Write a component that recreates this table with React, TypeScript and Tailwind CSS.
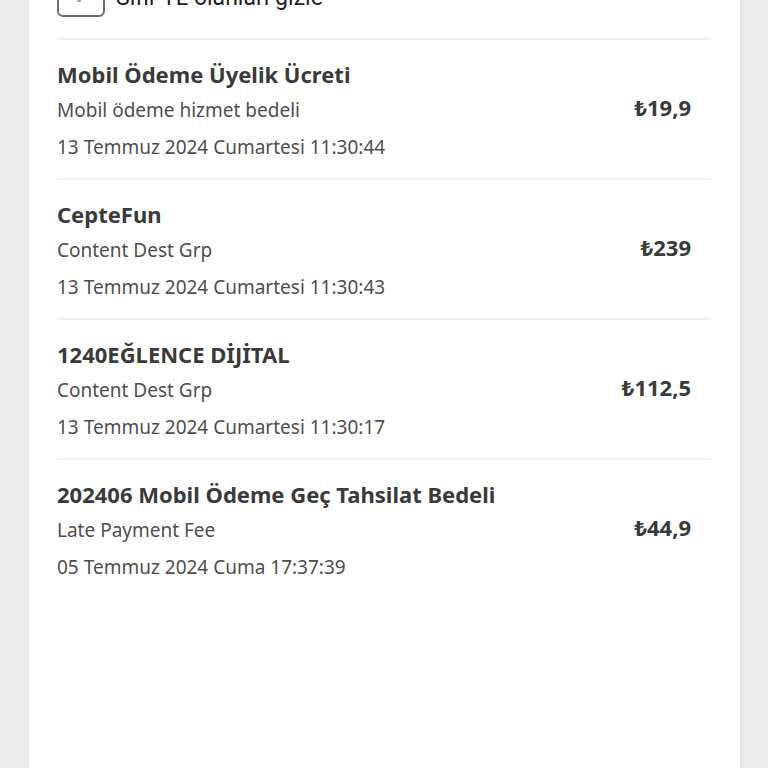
import React from "react";

type Item = {
  title: string;
  detail: string;
  date: string;
  amount: string;
};

const items: Item[] = [
  {
    title: "Mobil Ödeme Üyelik Ücreti",
    detail: "Mobil ödeme hizmet bedeli",
    date: "13 Temmuz 2024 Cumartesi 11:30:44",
    amount: "₺19,9",
  },
  {
    title: "CepteFun",
    detail: "Content Dest Grp",
    date: "13 Temmuz 2024 Cumartesi 11:30:43",
    amount: "₺239",
  },
  {
    title: "1240EĞLENCE DİJİTAL",
    detail: "Content Dest Grp",
    date: "13 Temmuz 2024 Cumartesi 11:30:17",
    amount: "₺112,5",
  },
  {
    title: "202406 Mobil Ödeme Geç Tahsilat Bedeli",
    detail: "Late Payment Fee",
    date: "05 Temmuz 2024 Cuma 17:37:39",
    amount: "₺44,9",
  },
];

function Row({ item }: { item: Item }) {
  return (
    <div className="flex items-center border-t-2 border-[#eeeeee] pt-[16px] pb-[13px]">
      <div className="flex-1 min-w-0">
        <div className="text-[22px] leading-[36px] font-bold text-[#3a3a3a]">{item.title}</div>
        <div className="text-[19px] leading-[37px] text-[#4e4e4e]">{item.detail}</div>
        <div className="text-[19px] leading-[36px] text-[#4e4e4e]">{item.date}</div>
      </div>
      <div className="pr-[20px] -mt-[6px] text-[22px] font-bold text-[#3a3a3a]">{item.amount}</div>
    </div>
  );
}

export default function App() {
  return (
    <div
      className="h-screen bg-[#ebebeb] overflow-hidden"
      style={{ fontFamily: '"Noto Sans", "DejaVu Sans", sans-serif' }}
    >
      <div className="ml-[29px] mr-[28px] h-[900px] bg-white shadow-[0_0_2px_rgba(0,0,0,0.08)] pl-[28px] pr-[29px]">
        {/* Sıfır TL filtresi */}
        <div className="flex items-center gap-[11px] -mt-[31px] pb-[21px]">
          <div className="relative shrink-0 w-[48px] h-[48px] rounded-[6px] border-2 border-[#6b6b6b]">
            <span className="absolute left-[18px] top-[29px] w-[4px] h-[2px] rounded bg-[#9a9a9a]" />
          </div>
          <span
            className="pt-[10px] text-[23px] leading-[30px] text-[#1f1f1f]"
            style={{ fontFamily: "Roboto, sans-serif" }}
          >
            Sıfır TL olanları gizle
          </span>
        </div>

        {items.map((item) => (
          <Row key={item.date} item={item} />
        ))}
      </div>
    </div>
  );
}
